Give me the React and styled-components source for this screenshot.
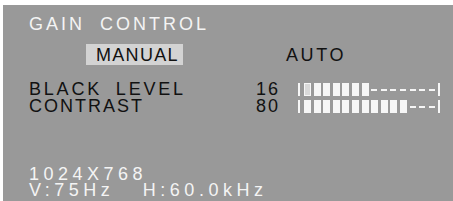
import React from "react";
import styled, { createGlobalStyle } from "styled-components";

const GlobalStyle = createGlobalStyle`
  html, body {
    margin: 0;
    padding: 0;
    background: #ffffff;
  }
  body {
    font-family: "Liberation Sans", Arial, sans-serif;
  }
`;

const Panel = styled.div`
  margin: 5px 0 0 3px;
  width: 450px;
  height: 196px;
  box-sizing: border-box;
  padding: 9px 0 0 26px;
  background: #999999;
  display: flex;
  flex-direction: column;
  font-size: 18px;
`;

const Title = styled.div`
  color: #f4f4f4;
  line-height: 20px;
  height: 20px;
  letter-spacing: 3px;
  word-spacing: 7px;
`;

const ModeRow = styled.div`
  display: flex;
  align-items: center;
  margin-top: 10px;
  height: 21px;
`;

const Mode = styled.div`
  color: #111111;
  line-height: 21px;
  height: 21px;
  box-sizing: border-box;
  padding-top: 1px;
  ${(p) =>
    p.$active
      ? `
    margin-left: 57px;
    width: 97px;
    padding-left: 10px;
    letter-spacing: 1.3px;
    background: #d3d3d3;
  `
      : `
    margin-left: 103px;
    letter-spacing: 2.6px;
  `}
`;

const Levels = styled.div`
  margin-top: 16px;
  display: flex;
  flex-direction: column;
`;

const LevelRow = styled.div`
  display: grid;
  grid-template-columns: 227px 42px auto;
  align-items: center;
  height: 17px;
  line-height: 17px;
  color: #111111;
`;

const Label = styled.span`
  letter-spacing: ${(p) => p.$spacing}px;
  word-spacing: 6px;
  white-space: nowrap;
`;

const Value = styled.span`
  letter-spacing: 2px;
`;

const Bar = styled.div`
  display: flex;
  align-items: center;
  height: 13px;
`;

const Edge = styled.div`
  width: 2px;
  height: 13px;
  background: #f6f6f6;
  margin: ${(p) => (p.$end ? "0 0 0 2.2px" : "0 4px 0 0")};
`;

const Segments = styled.div`
  display: flex;
  align-items: center;
  gap: 2.6px;
`;

const Cell = styled.div`
  width: 7px;
  height: 13px;
  display: flex;
  align-items: center;
  justify-content: flex-start;
`;

const Block = styled.div`
  width: 7px;
  height: 13px;
  box-sizing: border-box;
  background: ${(p) => (p.$hollow ? "#d9d9d9" : "#f6f6f6")};
  border: ${(p) => (p.$hollow ? "1.5px solid #f6f6f6" : "none")};
`;

const Dash = styled.div`
  width: 6px;
  height: 2px;
  background: #f6f6f6;
`;

const Info = styled.div`
  margin-top: 51px;
  color: #f4f4f4;
  letter-spacing: 4.5px;
  line-height: 16px;
  white-space: pre;
`;

const levels = [
  { label: "BLACK LEVEL", spacing: 2.8, value: 16, filled: 7, hollowFirst: true },
  { label: "CONTRAST", spacing: 2, value: 80, filled: 11, hollowFirst: false },
];

function LevelBar({ filled, hollowFirst }) {
  const cells = Array.from({ length: 14 }, (_, i) => i);
  return (
    <Bar>
      <Edge />
      <Segments>
        {cells.map((i) => (
          <Cell key={i}>
            {i < filled ? <Block $hollow={hollowFirst && i === 0} /> : <Dash />}
          </Cell>
        ))}
      </Segments>
      <Edge $end />
    </Bar>
  );
}

export default function App() {
  return (
    <>
      <GlobalStyle />
      <Panel>
        <Title>GAIN CONTROL</Title>
        <ModeRow>
          <Mode $active>MANUAL</Mode>
          <Mode>AUTO</Mode>
        </ModeRow>
        <Levels>
          {levels.map((l) => (
            <LevelRow key={l.label}>
              <Label $spacing={l.spacing}>{l.label}</Label>
              <Value>{l.value}</Value>
              <LevelBar filled={l.filled} hollowFirst={l.hollowFirst} />
            </LevelRow>
          ))}
        </Levels>
        <Info>
          {"1024X768\nV:75Hz   H:60.0kHz"}
        </Info>
      </Panel>
    </>
  );
}
